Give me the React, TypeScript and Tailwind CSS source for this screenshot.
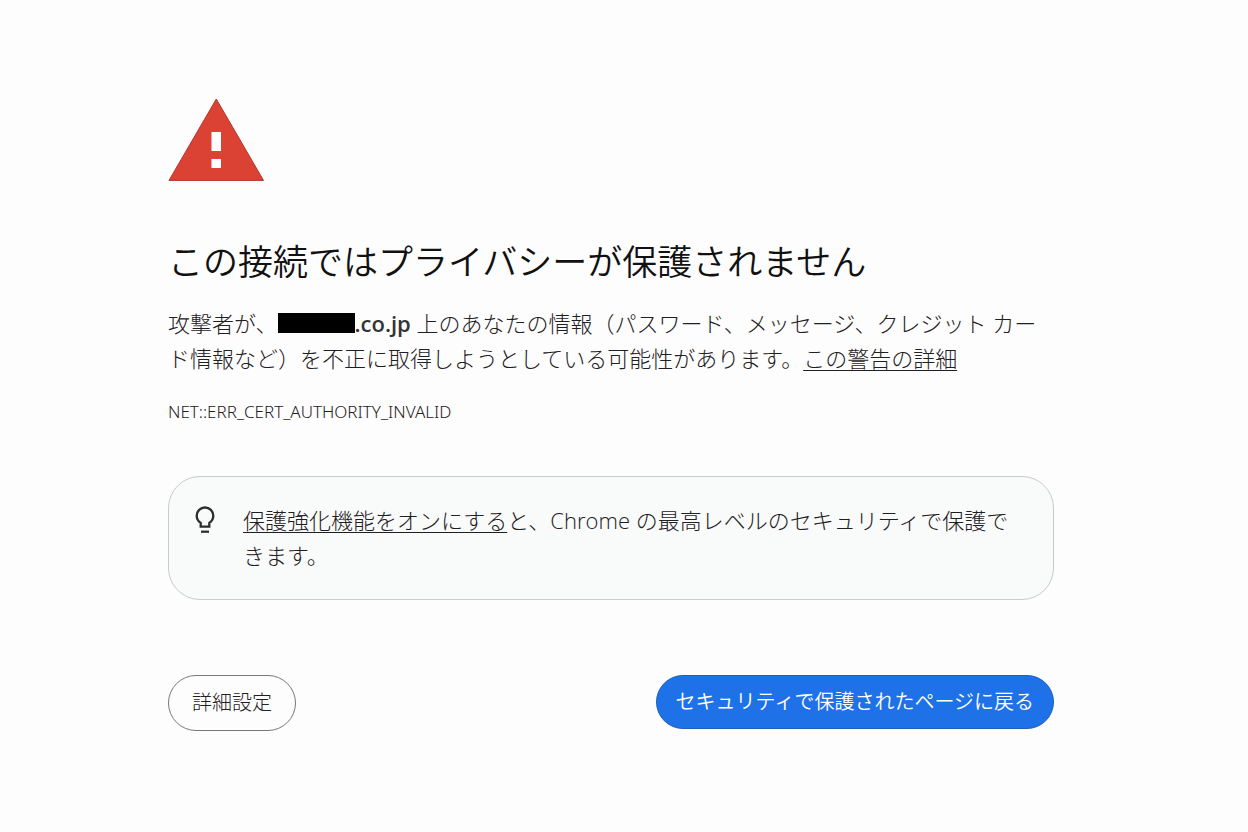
import type { ReactNode } from "react";

const errorCode = "NET::ERR_CERT_AUTHORITY_INVALID";

function WarningIcon() {
  return (
    <svg
      className="block h-[84px] w-24"
      viewBox="0 0 96 84"
      role="img"
      aria-label="警告"
    >
      <path
        d="M48.300 1 95.500 82.400H1Z"
        fill="#db4234"
        stroke="#b3352b"
        strokeWidth="1"
      />
      <path d="M43.500 34h9.500v19h-9.500zM43.500 61h9.500v9h-9.500z" fill="#fff" />
    </svg>
  );
}

function BulbIcon() {
  return (
    <svg
      className="mt-[3px] h-7 w-5 shrink-0"
      viewBox="0 0 20 28"
      fill="none"
      stroke="#2c2d2f"
      strokeWidth="2.300"
      aria-hidden="true"
    >
      <path d="M5.700 20.600v-3.700C3 15.200 1.700 12.800 1.700 9.800a8.300 8.300 0 0 1 16.600 0c0 3-1.300 5.400-4 7.100v3.700z" />
      <path d="M6 25.700h8" />
    </svg>
  );
}

function TextLink({ children }: { children: ReactNode }) {
  return (
    <a href="#" className="underline decoration-1 underline-offset-3">
      {children}
    </a>
  );
}

export default function App() {
  return (
    <main
      lang="ja"
      className="min-h-screen bg-[#fdfdfd] pt-[98px] pr-[194px] pb-12 pl-[168px] font-['Open_Sans','Noto_Sans_CJK_JP',sans-serif] text-[22px] leading-[35px] font-light text-[#1f2022]"
    >
      <WarningIcon />

      <h1 className="mt-14 text-[35px] leading-[48px] font-[350] text-[#111]">
        この接続ではプライバシーが保護されません
      </h1>

      <p className="mt-5">
        攻撃者が、
        {/* Redacted host name */}
        <span className="inline-block h-5 w-[77px] bg-black align-[-1px]" />
        <strong className="font-semibold text-[#333436]">.co.jp</strong>{" "}
        上のあなたの情報（パスワード、メッセージ、クレジット カード情報など）を不正に取得しようとしている可能性があります。
        <TextLink>この警告の詳細</TextLink>
      </p>

      <p className="mt-6 font-['Noto_Sans','Open_Sans',sans-serif] text-[17px] leading-6">
        {errorCode}
      </p>

      <section className="mt-[52px] flex gap-7 rounded-[32px] border border-[#c9cacb] bg-[#f9fafa] py-[26px] pr-9 pl-[26px]">
        <BulbIcon />
        <p>
          <TextLink>保護強化機能をオンにする</TextLink>
          と、Chrome の最高レベルのセキュリティで保護できます。
        </p>
      </section>

      <div className="mt-[75px] flex items-start justify-between text-[20px] leading-7">
        <button
          type="button"
          className="rounded-full border border-[#77787a] px-[23px] py-[13px] font-light"
        >
          詳細設定
        </button>
        <button
          type="button"
          className="rounded-full border border-[#1d62b8] bg-[#1f71e8] px-[19px] py-3 font-[350] text-white"
        >
          セキュリティで保護されたページに戻る
        </button>
      </div>
    </main>
  );
}
